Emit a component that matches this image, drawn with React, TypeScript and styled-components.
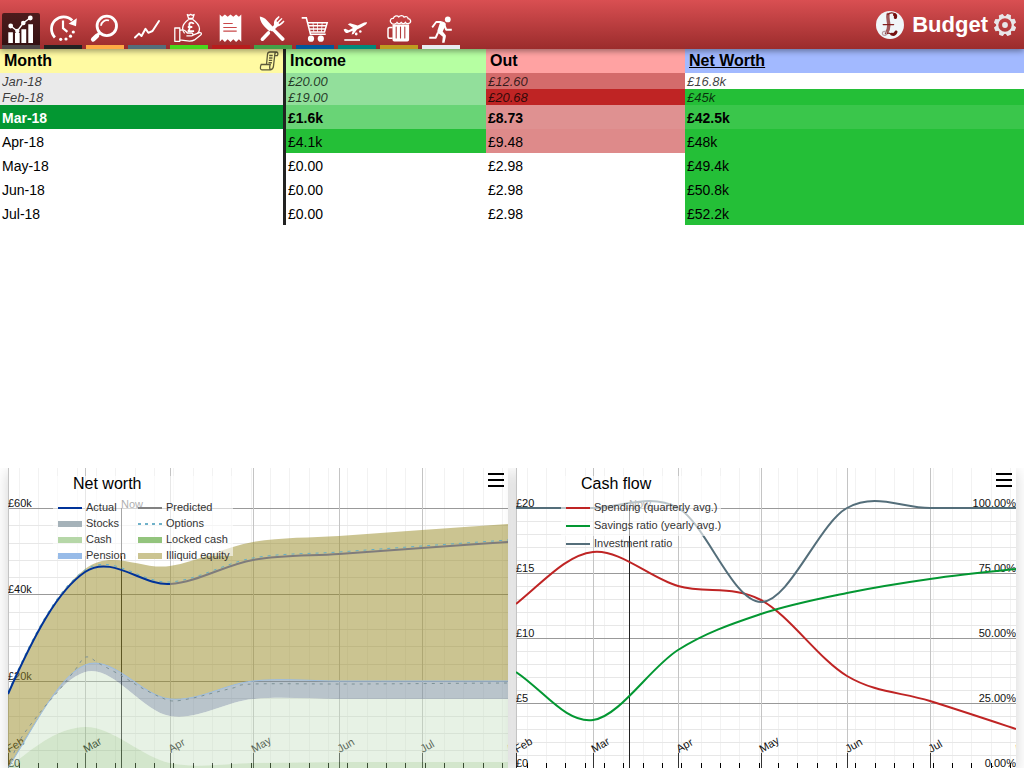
import React from 'react';
import styled, { createGlobalStyle, css } from 'styled-components';

const GlobalStyle = createGlobalStyle`
  * { box-sizing: border-box; }
  body {
    margin: 0;
    background: #fff;
    color: #000;
    font-family: "Liberation Sans", Arial, sans-serif;
    font-size: 14px;
  }
`;

const Page = styled.div`
  display: flex;
  flex-direction: column;
  min-height: 100vh;
`;

/* ---------- navigation ---------- */

const NavBar = styled.header`
  position: relative;
  z-index: 1;
  display: flex;
  align-items: center;
  justify-content: space-between;
  height: 49px;
  padding: 0 8px 0 2px;
  background: linear-gradient(#d94f52, #9b2c2c);
  box-shadow: 0 2px 6px rgba(0, 0, 0, 0.4);
`;

const NavList = styled.nav`
  display: flex;
  align-self: flex-end;
  gap: 4px;
`;

const NavLink = styled.a<{ $color: string; $active?: boolean }>`
  display: block;
  width: 38px;
  height: 36px;
  border-bottom: 4px solid ${(p) => p.$color};
  ${(p) =>
    p.$active &&
    css`
      background: linear-gradient(#4d1b1c, #351112);
      border-radius: 2px 2px 0 0;
    `}
`;

const NavIcon = styled.svg`
  display: block;
  width: 38px;
  height: 32px;
  fill: none;
  stroke: #fff;
  stroke-width: 2;
`;

const Brand = styled.div`
  display: flex;
  align-items: center;
  gap: 6px;
  height: 49px;
`;

const BrandName = styled.h1`
  margin: 0;
  padding-left: 2px;
  color: #fff;
  font-size: 22px;
  line-height: 28px;
`;

const IconButton = styled.button`
  display: block;
  padding: 0;
  border: 0;
  background: none;
  cursor: pointer;

  svg {
    display: block;
  }
`;

type NavEntry = { label: string; color: string; art: React.ReactNode };

const solid = { fill: '#fff', stroke: 'none' };

const navEntries: NavEntry[] = [
  {
    label: 'Overview',
    color: '#4d4545',
    art: (
      <>
        <path {...solid} d="M6.3 19.3h4.6V30H6.3zM13 20h4.7v10H13zM19.4 16.3h4.8V30h-4.8zM26.3 11.3H31V30h-4.7z" />
        <path strokeWidth="1.4" d="M8.7 13l6.6 5 6-8 7-5.3" />
        <g {...solid}>
          <circle cx="8.7" cy="13" r="2.4" />
          <circle cx="15.3" cy="18" r="2.2" />
          <circle cx="21.3" cy="10" r="2.3" />
          <circle cx="28.3" cy="5" r="2.4" />
        </g>
      </>
    ),
  },
  {
    label: 'Planning',
    color: '#222',
    art: (
      <>
        <path strokeWidth="2.8" d="M10.9 24.4A12 12 0 0 1 28.2 7.6" />
        <path {...solid} d="M32.8 5.2L32 13.2 24.6 10.8z" />
        <path strokeWidth="2.2" d="M19 7.5V15.2l4.4 3.6" />
        <g {...solid}>
          <circle cx="16.7" cy="26.3" r="1.6" />
          <circle cx="22" cy="26" r="1.6" />
          <circle cx="26.5" cy="23.2" r="1.6" />
          <circle cx="29.3" cy="19" r="1.6" />
        </g>
      </>
    ),
  },
  {
    label: 'Analysis',
    color: '#fa4',
    art: (
      <>
        <circle cx="20.8" cy="12.9" r="9.7" strokeWidth="2.8" />
        <path strokeWidth="1.8" d="M15 12.8a6 6 0 0 1 8-5.3" />
        <path strokeWidth="2.8" d="M14 19.6l-3 3" />
        <path strokeWidth="4.6" strokeLinecap="round" d="M10.9 22.9l-3.7 3.5" />
      </>
    ),
  },
  {
    label: 'Funds',
    color: '#546e7a',
    art: (
      <path
        strokeWidth="2"
        strokeLinejoin="round"
        strokeLinecap="round"
        d="M7 24.5L11 20.6 13.5 23 17.5 15.8 20.3 19.8 24.5 18 31 8"
      />
    ),
  },
  {
    label: 'Income',
    color: '#49d61d',
    art: (
      <g strokeWidth="1.3" strokeLinejoin="round">
        <path d="M18.6 5.5L17.3 1.5l2 .8 1.4-1 1.4 1 2-.8-1.3 4zM18.3 6.2h4.8" />
        <path d="M18.6 6.5c-3.3 2.3-6 5-6 9 0 2 .7 3.6 2 4.9M22.8 6.5c3.4 2.3 6.7 5.3 6.7 9.6 0 1.8-.7 3.3-2 4.4" />
        <path strokeWidth="1.8" d="M23.6 11c-.6-1.8-4.5-2-4.3.8.1 1.7 1.3 3.5-1 6.3h5.8M17.8 14h4.5" />
        <path d="M4.8 15h5v13.3h-5zM9.8 17.3c4-1.3 5.5.2 7.5 2.7h4.3c1.8 0 1.8 2.8 0 2.8h-5.2M23 22.2l6.2-2.5c2-.6 3 1.1 1.5 2.4l-6.2 4.8c-2 1.4-6.5 1.3-9.2.8l-5.5-.9" />
      </g>
    ),
  },
  {
    label: 'Bills',
    color: '#b71c1c',
    art: (
      <>
        <path
          {...solid}
          d="M7.7 1.5l2.4 2.3 2.8-2.4 2.8 2.4 2.8-2.4 2.8 2.4 2.8-2.4 2.8 2.4 2.4-2.3v27.3l-2.4-2.5-2.8 2.6-2.8-2.6-2.8 2.6-2.8-2.6-2.8 2.6-2.8-2.6-2.4 2.5z"
        />
        <path stroke="#c9484a" strokeWidth="1.2" d="M11.3 10.5h9.4M11.3 14.5h13.4M11.3 18.2h13.4" />
      </>
    ),
  },
  {
    label: 'Food',
    color: '#43a047',
    art: (
      <>
        <path {...solid} d="M5.8 3.6c2.6.4 5 1.6 7.2 3.8l6.5 7.1 10.5 10.3c1.7 1.8-.8 4.3-2.6 2.6L17.3 16.8l-1.7 1.6C9.8 13.5 6 9.5 5.8 3.6z" />
        <path strokeWidth="3.6" strokeLinecap="round" d="M22.3 12.2l-4.2 4.2M14.4 20l-6 6.2" />
        <path {...solid} d="M20.3 13.2c-1-4.5.2-7 4.5-10.2l.9.9-3.3 4.2.9.8 4.2-4 1 .9-4 4.3.9.8 4.2-3.4.9.9c-3.3 4.2-6 5.5-9.4 4.8z" />
      </>
    ),
  },
  {
    label: 'General',
    color: '#01579b',
    art: (
      <>
        <path strokeWidth="1.6" d="M5.7 4.9h4.6l4.2 16.3h15.2" />
        <path strokeWidth="1.5" d="M11.6 9.7h19.6l-2.7 9.3H14.2M12.5 12.8h17.8M13.3 15.9h16" />
        <path strokeWidth="0.8" d="M17 9.7l.8 9.3M21.5 9.7V19M26.2 9.7L25.4 19" />
        <circle {...solid} cx="15" cy="25.7" r="3.1" />
        <circle {...solid} cx="24.8" cy="25.7" r="3.1" />
      </>
    ),
  },
  {
    label: 'Holiday',
    color: '#00897b',
    art: (
      <>
        <path {...solid} d="M5.6 16.4l1.7-.6 3.4 1.4 4.3-2.3-5.2-3.6 2.3-1 7.6 2.3c3.3-1.6 5.8-3.7 9.3-3.4.4 1.5-2.8 3.7-6.4 5.5l-3.6 1.7-3.4 4.5-2 .5 1.1-3.6-4.7 2c-1.5.5-3.2.1-4.4-3.4z" />
        <circle {...solid} cx="18.2" cy="21" r="1.4" />
        <circle {...solid} cx="22.3" cy="18.5" r="1.3" />
        <path strokeWidth="1.6" d="M6.3 27H22" />
      </>
    ),
  },
  {
    label: 'Social',
    color: '#bf9b20',
    art: (
      <>
        <path strokeWidth="1.3" d="M11.7 10.4c-2.6-1.8-1.4-5.3 1.6-5 .8-2.9 4.3-3.1 5.5-1.5 1.4-1.8 4.3-1.8 5.2.2 2-1.2 4.1-.2 4.1 1.6 3.1.2 3.4 4 .7 4.7-1.9.6-3-.2-3.4-1-1.2 1.7-3.1 1.6-4.2.1-1.2 1.5-3.1 1.5-4.2 0-1.2 1.8-3.8 2-5.3.9z" />
        <path strokeWidth="1.5" d="M12.6 14.4H9.8c-1.2 0-1.8.7-1.8 1.8v7.2c0 1.2.6 1.8 1.8 1.8h2.8" />
        <path {...solid} d="M12.5 11.6h16.6v14.9c0 1.2-.7 1.9-1.8 1.9h-13c-1.1 0-1.8-.7-1.8-1.9z" />
        <path stroke="#b43b3d" strokeWidth="1.1" strokeLinecap="round" d="M16.2 14v11M20.5 14v11M24.8 14v11" />
      </>
    ),
  },
  {
    label: 'Activity',
    color: '#e8eaf0',
    art: (
      <>
        <circle {...solid} cx="25.8" cy="6.4" r="2.9" />
        <path strokeWidth="1.8" strokeLinejoin="round" d="M10.2 14.4l4-5.4h5" />
        <path {...solid} d="M18.4 8.2c1.6-.3 4.4.7 5.2 2.2.4.8.2 1.4-.1 2.1l-2.8 6 2.7 3.2c.6.8.5 1.3.4 2.2l-1.3 5.9h-2.4l.7-6-4.5-3.7c-1-.9-1.2-1.8-.8-2.9z" />
        <path strokeWidth="2" strokeLinejoin="round" d="M22.5 12.5l1.7 4.2h5.6M16 19.5L13.6 24.8H7.2" />
      </>
    ),
  },
];

function Logo() {
  return (
    <svg width="28" height="28" viewBox="0 0 28 28" aria-hidden="true">
      <circle cx="14" cy="14" r="14" fill="#f0f6f9" />
      <g fill="none" strokeLinecap="round">
        <path stroke="#a0585a" strokeWidth="3.4" d="M12 3.6c-.8 3.6.8 7 .8 10.6 0 3-.8 5.6-2.4 7.8" />
        <path stroke="#84201f" strokeWidth="1.3" d="M7.2 13.6h10.4M11.8 3.6c1.7-2.2 5.4-2.4 7.6-.4M9.6 22.6c3-1.4 4.6-.2 6.8.9" />
        <path stroke="#74100f" strokeWidth="3.2" d="M18.6 3.8c.8.4 1.2 1.4.8 2.6" />
        <path stroke="#74100f" strokeWidth="3" d="M15.8 23.2c1.8.6 3.4-.2 4.2-2.2" />
        <circle cx="8.4" cy="22.4" r="2" stroke="#b9a2a8" strokeWidth="1.2" />
      </g>
    </svg>
  );
}

function Gear() {
  return (
    <svg width="22" height="22" viewBox="-11 -11 22 22" aria-hidden="true">
      <g fill="#e8e6e8">
        {[0, 45, 90, 135, 180, 225, 270, 315].map((a) => (
          <path key={a} transform={`rotate(${a + 22})`} d="M-3-7.6L-2-11.2H2L3-7.6z" />
        ))}
        <circle r="2.9" />
      </g>
      <circle r="7.8" fill="none" stroke="#e8e6e8" strokeWidth="2.2" />
    </svg>
  );
}

/* ---------- overview table ---------- */

const OverviewTable = styled.table`
  width: 100%;
  table-layout: fixed;
  border-collapse: separate;
  border-spacing: 0;
`;

const Column = styled.col<{ $width?: number }>`
  ${(p) => p.$width && `width: ${p.$width}px;`}
`;

const HeadCell = styled.th<{ $bg: string; $edge?: boolean }>`
  height: 24px;
  padding: 0 4px;
  background: ${(p) => p.$bg};
  border-right: ${(p) => (p.$edge ? '3px solid #222' : '0')};
  font-size: 16px;
  line-height: 24px;
  text-align: left;
`;

const HeadContent = styled.div`
  display: flex;
  align-items: center;
  justify-content: space-between;
`;

const HeadLink = styled.a`
  color: #000;
`;

type RowKind = 'past' | 'active' | 'future';

const rowStyles = {
  past: css`
    height: 16px;
    color: rgba(0, 0, 0, 0.75);
    font-size: 13px;
    font-style: italic;
    line-height: 14px;
  `,
  active: css`
    height: 24px;
    font-weight: bold;
    line-height: 22px;
  `,
  future: css`
    height: 24px;
    line-height: 22px;
  `,
};

const Row = styled.tr<{ $kind: RowKind }>`
  ${(p) => rowStyles[p.$kind]}
`;

const Cell = styled.td<{ $bg?: string }>`
  padding: 2px 2px 0;
  background: ${(p) => p.$bg || '#fff'};
`;

const monthBg: Record<RowKind, string> = { past: '#eaeaea', active: '#039732', future: '#fff' };

const MonthCell = styled.th<{ $kind: RowKind }>`
  padding: 2px 2px 0;
  border-right: 3px solid #222;
  background: ${(p) => monthBg[p.$kind]};
  color: ${(p) => (p.$kind === 'active' ? '#fff' : 'inherit')};
  font-weight: inherit;
  text-align: left;
`;

type Amount = [string, string?];
const rows: { month: string; kind: RowKind; cells: Amount[] }[] = [
  { month: 'Jan-18', kind: 'past', cells: [['£20.00', '#92df9b'], ['£12.60', '#d46b6b'], ['£16.8k']] },
  { month: 'Feb-18', kind: 'past', cells: [['£19.00', '#92df9b'], ['£20.68', '#bf2424'], ['£45k', '#24bf37']] },
  { month: 'Mar-18', kind: 'active', cells: [['£1.6k', '#69d476'], ['£8.73', '#df9191'], ['£42.5k', '#3ac64b']] },
  { month: 'Apr-18', kind: 'future', cells: [['£4.1k', '#24bf37'], ['£9.48', '#de8a8a'], ['£48k', '#24bf37']] },
  { month: 'May-18', kind: 'future', cells: [['£0.00'], ['£2.98'], ['£49.4k', '#24bf37']] },
  { month: 'Jun-18', kind: 'future', cells: [['£0.00'], ['£2.98'], ['£50.8k', '#24bf37']] },
  { month: 'Jul-18', kind: 'future', cells: [['£0.00'], ['£2.98'], ['£52.2k', '#24bf37']] },
];

function Scroll() {
  return (
    <svg width="20" height="20" viewBox="0 0 20 20" fill="none" stroke="#5d5a3a" strokeWidth="1.3" aria-hidden="true">
      <path d="M7.5 13.5L8.5 3.5C8.6 1.8 9.5 1 11 1h6.8c-1.4.2-2 1-2 2.6L14.5 15c-.2 2.4-1 3.5-3 3.8H2.8c-1.6 0-2-2.3-.6-5.3h9c-.8 2.6-.8 4.8.6 5.2M17.8 1c1.3.2 1.4 2.8.4 3.7h-2.5" />
      <path d="M10.2 4.5h3.5M10 7h3.5M9.8 9.4h3.4M9.5 11.7h3.4" strokeWidth="1.4" />
    </svg>
  );
}

/* ---------- charts ---------- */

const Charts = styled.main`
  display: grid;
  grid-template-columns: 1fr 1fr;
  gap: 8px;
  margin-top: auto;
  padding: 0 8px;
  overflow: hidden;
`;

const Panel = styled.section`
  position: relative;
  background: #fff;
  box-shadow: 0 4px 14px rgba(0, 0, 0, 0.18);
`;

const Plot = styled.svg`
  display: block;
  width: 100%;
  height: auto;
  font-size: 11px;
`;

const MenuButton = styled(IconButton)`
  position: absolute;
  top: 4px;
  right: 4px;
`;

type Point = [number, number];

const WIDTH = 500;
const HEIGHT = 300;

/* Catmull-Rom spline; the first and last points only steer the tangents */
function spline(points: Point[], from = 1, to = points.length - 2): string {
  let path = `M${points[from][0]} ${points[from][1]}`;
  for (let i = from; i < to; i += 1) {
    const [before, p, next, after] = points.slice(i - 1, i + 3);
    const c1 = [p[0] + (next[0] - before[0]) / 6, p[1] + (next[1] - before[1]) / 6];
    const c2 = [next[0] - (after[0] - p[0]) / 6, next[1] - (after[1] - p[1]) / 6];
    path += `C${c1[0].toFixed(1)} ${c1[1].toFixed(1)} ${c2[0].toFixed(1)} ${c2[1].toFixed(1)} ${next[0]} ${next[1]}`;
  }
  return path;
}

function band(top: Point[], bottom: Point[]): string {
  return `${spline(top)}L${spline([...bottom].reverse()).slice(1)}Z`;
}

const months: [string, number][] = [
  ['Feb', 0], ['Mar', 77], ['Apr', 162], ['May', 245], ['Jun', 331], ['Jul', 414], ['Aug', 500],
];

/* one value for each month, with a neighbour outside the plot on either side */
const monthXs = [-85, 0, 77, 162, 245, 331, 414, 500, 586];
const monthly = (ys: number[]): Point[] => ys.map((y, i) => [monthXs[i], y]);

const weeks = [
  11, 30, 49, 69, 88, 107, 127, 146, 165, 185, 204, 223, 243, 262, 281, 301, 320, 339, 359, 378, 397, 417, 436, 455,
  475, 494,
];
const NOW = 113;

function Grid({ major, divisions }: { major: number[]; divisions: number }) {
  const step = major[1] - major[0];
  const minor: number[] = [];
  major.slice(0, -1).forEach((y) => {
    for (let i = 1; i < divisions; i += 1) minor.push(Math.round(y + (i * step) / divisions));
  });
  return (
    <g shapeRendering="crispEdges">
      {weeks.map((x) => <rect key={x} x={x} width="1" height={HEIGHT} fill="#f2f2f2" />)}
      {minor.map((y) => <rect key={y} y={y} width={WIDTH} height="1" fill="#e7e7e7" />)}
      {major.map((y) => <rect key={y} y={Math.floor(y)} width={WIDTH} height="1" fill="#999" />)}
      {months.map(([m, x]) => <rect key={m} x={x} width="1" height={HEIGHT} fill="#c4c4c4" />)}
      {weeks.map((x) => <rect key={x} x={x} y="295" width="1" height="5" fill="#000" />)}
      {months.map(([m, x]) => <rect key={m} x={x} y="285" width="1" height="15" fill="#333" />)}
      <rect x={NOW} y="40" width="1" height="260" fill="#222" />
    </g>
  );
}

function MonthLabels() {
  return (
    <g fill="#111">
      {months.map(([m, x]) => (
        <text key={m} transform={`translate(${x + 1} 285) rotate(-30)`}>{m}</text>
      ))}
    </g>
  );
}

type LegendItem = { label: string; color: string; shape: 'line' | 'dash' | 'fill'; x: number; y: number };

function Legend({ items, width, height }: { items: LegendItem[]; width: number; height: number }) {
  return (
    <g>
      <rect x="45" y="8" width={width} height={height} fill="#fff" fillOpacity="0.6" />
      {items.map(({ label, color, shape, x, y }) => (
        <g key={label}>
          {shape === 'fill' ? (
            <rect x={x} y={y - 3} width="24" height="6" fill={color} />
          ) : (
            <path
              d={`M${x} ${y}h24`}
              stroke={color}
              strokeWidth="2"
              strokeDasharray={shape === 'dash' ? '3 4' : undefined}
            />
          )}
          <text x={x + 28} y={y + 3} fill="#333">{label}</text>
        </g>
      ))}
    </g>
  );
}

function Menu() {
  return (
    <MenuButton type="button" aria-label="Chart options">
      <svg width="16" height="16" viewBox="0 0 16 16" aria-hidden="true">
        <path d="M0 1h16v2H0zM0 7h16v2H0zM0 13h16v2H0z" />
      </svg>
    </MenuButton>
  );
}

const APRIL = 3;
const equity = monthly([468, 224, 101, 98, 74, 68, 62, 56, 50]);
const worth = monthly([470, 226, 104, 116, 92, 86, 80, 74, 68]);
const stocks = monthly([449, 300, 197, 231, 213, 213, 213, 213, 213]);
const cash = monthly([487, 300, 204, 248, 231, 231, 231, 231, 231]);
const locked = monthly([391, 300, 259, 295, 295, 294, 294, 294, 294]);
const floor = monthly([300, 300, 300, 300, 300, 300, 300, 300, 300]);

const options: Point[] = [
  [-10, 322], [0, 300], [12, 272], [34, 242], [52, 221], [67, 202], [78, 189], [92, 196], [114, 208], [132, 219],
  [152, 229], [165, 233], [185, 230], [205, 225], [225, 220], [246, 216], [350, 216], [500, 215], [600, 215],
];

const shift = (points: Point[], dy: number): Point[] => points.map(([x, y]) => [x, y + dy]);

const netWorthLegend: LegendItem[] = [
  { label: 'Actual', color: '#039', shape: 'line', x: 50, y: 40 },
  { label: 'Stocks', color: '#a5b2b9', shape: 'fill', x: 50, y: 56 },
  { label: 'Cash', color: '#b6d7a8', shape: 'fill', x: 50, y: 72 },
  { label: 'Pension', color: '#97bbe8', shape: 'fill', x: 50, y: 88 },
  { label: 'Predicted', color: '#828282', shape: 'line', x: 130, y: 40 },
  { label: 'Options', color: '#6fb1c9', shape: 'dash', x: 130, y: 56 },
  { label: 'Locked cash', color: '#93c47d', shape: 'fill', x: 130, y: 72 },
  { label: 'Illiquid equity', color: '#cbc491', shape: 'fill', x: 130, y: 88 },
];

function NetWorthChart() {
  return (
    <Panel>
      <Plot viewBox={`0 0 ${WIDTH} ${HEIGHT}`} role="img" aria-label="Net worth">
        <Grid major={[40, 126.5, 213, 300]} divisions={5} />
        <MonthLabels />
        <g fill="#111">
          <text x="0" y="39">£60k</text>
          <text x="0" y="125">£40k</text>
          <text x="0" y="212">£20k</text>
          <text x="0" y="299">£0</text>
        </g>
        <text x={NOW} y="40" fill="#333">Now</text>
        <path d={band(equity, stocks)} fill="rgba(151,137,35,0.5)" />
        <path d={band(stocks, cash)} fill="rgba(116,138,152,0.5)" />
        <path d={band(cash, locked)} fill="rgba(195,222,190,0.4)" />
        <path d={band(locked, floor)} fill="rgba(145,192,128,0.4)" />
        <g fill="none">
          <path d={spline(stocks)} stroke="#9bbce0" />
          <path d={spline(options)} stroke="#7d9297" strokeDasharray="3 5" />
          <path d={spline(shift(worth, -2))} stroke="#62afc9" strokeDasharray="3 5" />
          <path d={spline(worth, APRIL)} stroke="#7f7c7c" strokeWidth="2" />
          <path d={spline(worth, 1, APRIL)} stroke="#039" strokeWidth="2" />
        </g>
        <Legend items={netWorthLegend} width={180} height={80} />
        <text x="65" y="21" fontSize="16">Net worth</text>
      </Plot>
      <Menu />
    </Panel>
  );
}

const spending = monthly([214, 136, 84, 118, 132, 208, 233, 261, 290]);
const savings = monthly([146, 204, 252, 182, 146, 125, 111, 101, 93]);
const investment = monthly([40, 40, 40, 40, 134, 40, 40, 40, 40]);

const cashFlowLegend: LegendItem[] = [
  { label: 'Spending (quarterly avg.)', color: '#bf2424', shape: 'line', x: 50, y: 40 },
  { label: 'Savings ratio (yearly avg.)', color: '#039732', shape: 'line', x: 50, y: 58 },
  { label: 'Investment ratio', color: '#546e7a', shape: 'line', x: 50, y: 76 },
];

const cashFlowAxis: [string, string, number][] = [
  ['£20', '100.00%', 39], ['£15', '75.00%', 104], ['£10', '50.00%', 169], ['£5', '25.00%', 234], ['£0', '0.00%', 299],
];

function CashFlowChart() {
  return (
    <Panel>
      <Plot viewBox={`0 0 ${WIDTH} ${HEIGHT}`} role="img" aria-label="Cash flow">
        <Grid major={[40, 105, 170, 235, 300]} divisions={5} />
        <MonthLabels />
        <g fill="#111">
          {cashFlowAxis.map(([left, right, y]) => (
            <React.Fragment key={left}>
              <text x="0" y={y}>{left}</text>
              <text x="500" y={y} textAnchor="end">{right}</text>
            </React.Fragment>
          ))}
        </g>
        <text x={NOW} y="40" fill="#333">Now</text>
        <g fill="none" strokeWidth="2">
          <path d={spline(spending)} stroke="#bf2424" />
          <path d={spline(savings)} stroke="#039732" />
          <path d={spline(investment)} stroke="#546e7a" />
        </g>
        <Legend items={cashFlowLegend} width={160} height={60} />
        <text x="65" y="21" fontSize="16">Cash flow</text>
      </Plot>
      <Menu />
    </Panel>
  );
}

export default function App() {
  return (
    <Page>
      <GlobalStyle />
      <NavBar>
        <NavList>
          {navEntries.map(({ label, color, art }, i) => (
            <NavLink key={label} href={`#${label.toLowerCase()}`} aria-label={label} $color={color} $active={i === 0}>
              <NavIcon viewBox="0 0 38 32" aria-hidden="true">{art}</NavIcon>
            </NavLink>
          ))}
        </NavList>
        <Brand>
          <Logo />
          <BrandName>Budget</BrandName>
          <IconButton type="button" aria-label="Settings"><Gear /></IconButton>
        </Brand>
      </NavBar>
      <OverviewTable>
        <colgroup>
          <Column $width={286} />
          <Column $width={200} />
          <Column $width={199} />
          <Column />
        </colgroup>
        <thead>
          <tr>
            <HeadCell $bg="#fffaa2" $edge>
              <HeadContent>Month<Scroll /></HeadContent>
            </HeadCell>
            <HeadCell $bg="#b6ffa2">Income</HeadCell>
            <HeadCell $bg="#ffa2a2">Out</HeadCell>
            <HeadCell $bg="#a2b9ff"><HeadLink href="#net-worth">Net Worth</HeadLink></HeadCell>
          </tr>
        </thead>
        <tbody>
          {rows.map(({ month, kind, cells }) => (
            <Row key={month} $kind={kind}>
              <MonthCell scope="row" $kind={kind}>{month}</MonthCell>
              {cells.map(([value, bg], i) => <Cell key={i} $bg={bg}>{value}</Cell>)}
            </Row>
          ))}
        </tbody>
      </OverviewTable>
      <Charts>
        <NetWorthChart />
        <CashFlowChart />
      </Charts>
    </Page>
  );
}
